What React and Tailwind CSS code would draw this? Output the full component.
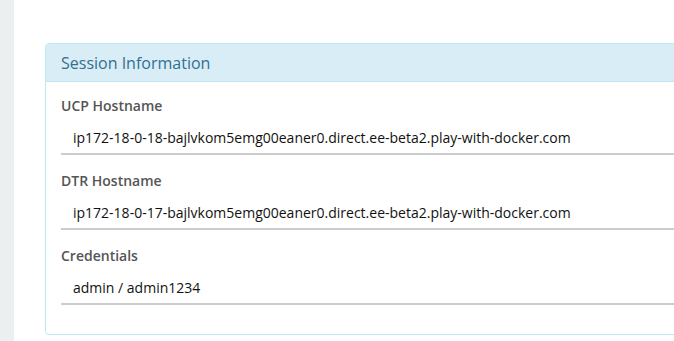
const FIELDS = [
  { label: 'UCP Hostname', value: 'ip172-18-0-18-bajlvkom5emg00eaner0.direct.ee-beta2.play-with-docker.com' },
  { label: 'DTR Hostname', value: 'ip172-18-0-17-bajlvkom5emg00eaner0.direct.ee-beta2.play-with-docker.com' },
  { label: 'Credentials', value: 'admin / admin1234' },
];

const App = () => {
  return (
    <div className="flex h-[341px] w-[674px] overflow-hidden bg-white font-['Open_Sans',sans-serif]">
      {/* Sidebar edge */}
      <div className="w-[14px] shrink-0 bg-[#ebeff0]" />

      <div className="pl-[31px] pt-[43px]">
        {/* Panel */}
        <div className="w-[680px] shrink-0 rounded-[4px] border border-[#bce8f1] bg-white">
          <div className="flex h-[38px] items-center rounded-t-[3px] border-b border-[#bce8f1] bg-[#d9edf7] px-[15px] text-[16px] text-[#31708f]">
            Session Information
          </div>

          <div className="px-[15px] pt-[14px] pb-[13px]">
            {FIELDS.map((f) => (
              <div key={f.label} className="mb-[16px]">
                <label className="mb-[5px] block text-[14px] leading-[20px] font-semibold text-[#555]">
                  {f.label}
                </label>
                <div className="flex h-[34px] items-center border-b-2 border-[#ccc] px-[12px] text-[14px] text-[#111]">
                  {f.value}
                </div>
              </div>
            ))}
          </div>
        </div>
      </div>
    </div>
  );
};

export default App;
